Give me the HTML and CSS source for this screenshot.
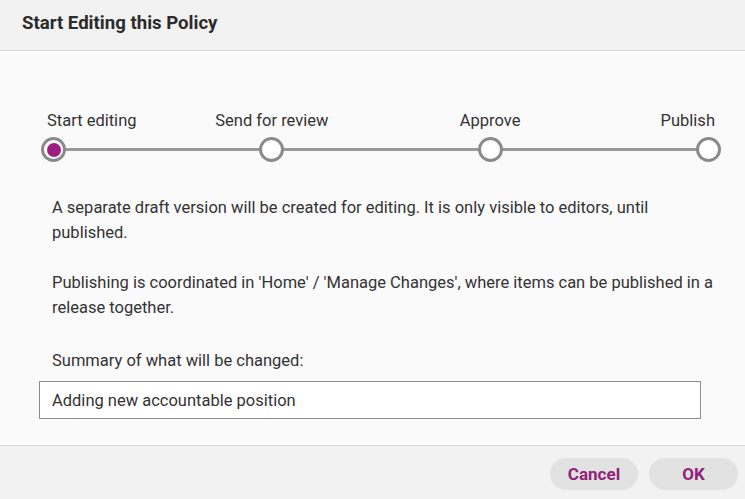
FILE: index.html
```html
<!DOCTYPE html>
<html lang="en">
<head>
<meta charset="utf-8">
<title>Start Editing this Policy</title>
<link rel="stylesheet" href="styles.css">
</head>
<body>
<div class="dialog">
  <header class="dialog-header">
    <h1 class="dialog-title">Start Editing this Policy</h1>
  </header>
  <main class="dialog-body">
    <div class="stepper">
      <div class="step step-first">
        <span class="step-label">Start editing</span>
        <span class="step-dot step-dot-active"></span>
      </div>
      <div class="step-line"></div>
      <div class="step">
        <span class="step-label">Send for review</span>
        <span class="step-dot"></span>
      </div>
      <div class="step-line"></div>
      <div class="step">
        <span class="step-label">Approve</span>
        <span class="step-dot"></span>
      </div>
      <div class="step-line"></div>
      <div class="step step-last">
        <span class="step-label">Publish</span>
        <span class="step-dot"></span>
      </div>
    </div>
    <p class="info">A separate draft version will be created for editing. It is only visible to editors, until published.</p>
    <p class="info">Publishing is coordinated in 'Home' / 'Manage Changes', where items can be published in a release together.</p>
    <label class="summary-label" for="summary">Summary of what will be changed:</label>
    <input class="summary-input" id="summary" type="text" value="Adding new accountable position">
  </main>
  <footer class="dialog-footer">
    <button class="btn" type="button">Cancel</button>
    <button class="btn" type="button">OK</button>
  </footer>
</div>
</body>
</html>
```

FILE: styles.css
```css
* { box-sizing: border-box; }

html, body {
  margin: 0;
  padding: 0;
  height: 100%;
}

body {
  font-family: Roboto, "Liberation Sans", Arial, sans-serif;
  color: #333;
  background: #fafafa;
}

.dialog {
  width: 745px;
  height: 499px;
  display: flex;
  flex-direction: column;
  background: #fafafa;
}

.dialog-header {
  height: 51px;
  background: #f2f2f2;
  border-bottom: 1px solid #d9d9d9;
  padding: 0 22px;
  display: flex;
  align-items: center;
  flex-shrink: 0;
}

.dialog-title {
  margin: 0;
  font-size: 18.6px;
  font-weight: 700;
  color: #2b2b2b;
  padding-bottom: 4px;
}

.dialog-body {
  flex: 1;
  padding: 60px 44px 0 39px;
  display: flex;
  flex-direction: column;
}

.stepper {
  display: flex;
  align-items: flex-end;
  margin: 0 -20px 0 2px;
}

.step {
  width: 25px;
  display: flex;
  flex-direction: column;
  align-items: center;
  flex-shrink: 0;
}

.step-first { align-items: flex-start; }
.step-first .step-label { margin-left: 6px; }
.step-last { align-items: flex-end; }
.step-last .step-label { margin-right: 6px; }

.step-label {
  font-size: 16.5px;
  line-height: 19px;
  white-space: nowrap;
  color: #333;
  margin-bottom: 7px;
}

.step-dot {
  width: 25px;
  height: 25px;
  border-radius: 50%;
  border: 3px solid #8a8a8a;
  background: #fff;
  display: flex;
  align-items: center;
  justify-content: center;
  position: relative;
  z-index: 1;
}

.step-dot-active::after {
  content: "";
  width: 14px;
  height: 14px;
  border-radius: 50%;
  background: #9c1f80;
}

.step-line {
  flex: 1;
  height: 3px;
  background: #999;
  margin: 0 -1px 11px;
}

.info {
  margin: 33px -20px 0 13px;
  font-size: 16.5px;
  line-height: 25px;
  color: #333;
}

.info + .info { margin-top: 25px; }

.summary-label {
  margin: 28px 0 0 13px;
  font-size: 16.5px;
  line-height: 25px;
  color: #333;
}

.summary-input {
  margin-top: 8px;
  width: 662px;
  height: 38px;
  border: 1px solid #8c8c8c;
  background: #fff;
  padding: 0 12px;
  font-family: inherit;
  font-size: 16.5px;
  color: #333;
  outline: none;
}

.dialog-footer {
  height: 54px;
  flex-shrink: 0;
  background: #f2f2f2;
  border-top: 1px solid #d9d9d9;
  display: flex;
  justify-content: flex-end;
  align-items: flex-start;
  gap: 11px;
  padding: 12px 7px 0 0;
}

.btn {
  width: 88px;
  height: 32px;
  border: none;
  border-radius: 16px;
  background: #e2e2e2;
  color: #912277;
  font-family: inherit;
  font-size: 17px;
  font-weight: 700;
  cursor: pointer;
}

.btn + .btn { width: 89px; }
```
